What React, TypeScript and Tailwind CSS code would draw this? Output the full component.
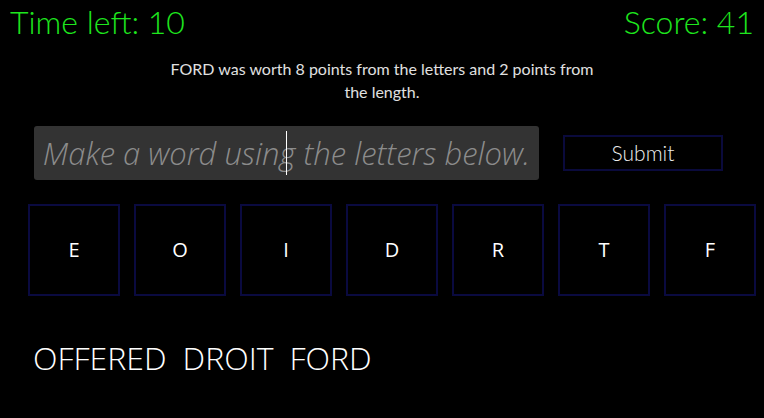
import { useState } from 'react'

const letters = ['E', 'O', 'I', 'D', 'R', 'T', 'F']
const words = ['OFFERED', 'DROIT', 'FORD']

const geo = { fontFamily: 'Lato, "Noto Sans", sans-serif' }
const tile = { fontFamily: '"Open Sans", "Noto Sans", sans-serif' }

export default function App() {
  const [word, setWord] = useState('')

  return (
    <div className="w-full h-[418px] bg-black text-white overflow-hidden" style={geo}>
      <div className="flex justify-between items-start px-[10px] text-[32px] leading-[44px] text-[#1ee61e] font-light">
        <span>Time left: 10</span>
        <span>Score: 41</span>
      </div>

      <p className="mx-auto mt-[13px] w-[445px] text-center text-[16px] leading-[23px] text-[#e0e0e0]">
        FORD was worth 8 points from the letters and 2 points from the length.
      </p>

      <div className="flex items-center gap-[24px] pl-[34px] mt-[23px]">
        <div className="relative">
          <input
            value={word}
            onChange={e => setWord(e.target.value)}
            placeholder="Make a word using the letters below."
            className="w-[505px] h-[54px] rounded-[3px] bg-[#333333] text-center text-[31px] italic font-light text-white placeholder:text-[#8c8c8c] outline-none"
            style={tile}
          />
          <span className="absolute left-[252px] top-[5px] h-[44px] w-px bg-white" />
        </div>
        <button className="w-[160px] h-[36px] border-2 border-[#0a0a3c] text-[21px] font-light text-[#ececec]">
          Submit
        </button>
      </div>

      <div className="flex gap-[14px] pl-[28px] mt-[24px]">
        {letters.map(l => (
          <div
            key={l}
            className="w-[92px] h-[92px] border-2 border-[#0a0a40] flex items-center justify-center text-[20px] text-white"
            style={tile}
          >
            {l}
          </div>
        ))}
      </div>

      <div className="flex gap-[16px] pl-[33px] mt-[38px] text-[32px] font-light text-white" style={tile}>
        {words.map(w => (
          <span key={w}>{w}</span>
        ))}
      </div>
    </div>
  )
}
